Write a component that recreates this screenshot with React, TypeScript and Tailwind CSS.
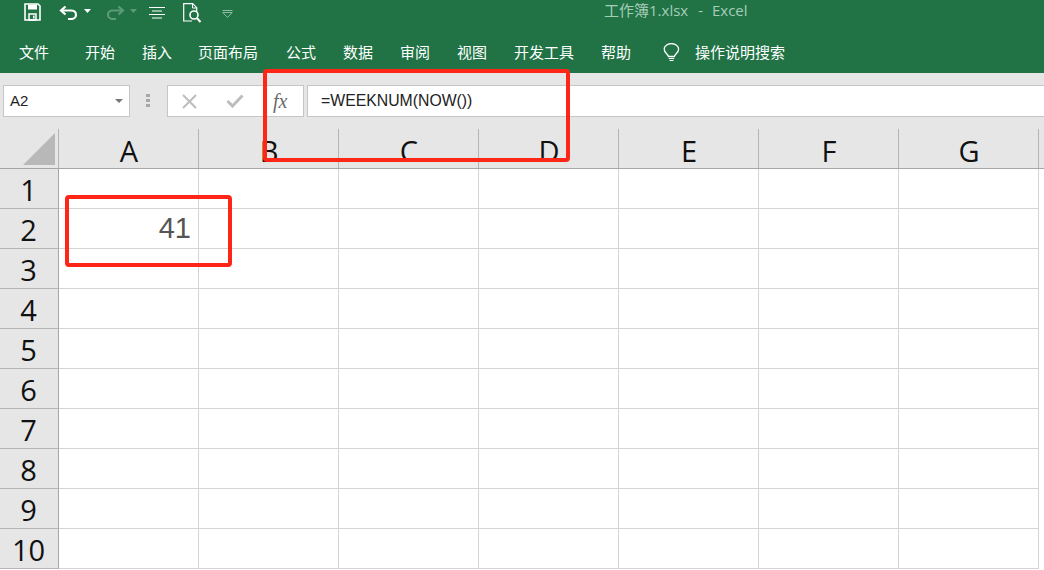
const CJK = "font-['Noto_Sans_CJK_SC','Noto_Sans',sans-serif]";

const menus: [string, string][] = [
  ["文件", "w-[30px] ml-[19px]"],
  ["开始", "w-[30px] ml-[36px]"],
  ["插入", "w-[30px] ml-[27px]"],
  ["页面布局", "w-[60px] ml-[26px]"],
  ["公式", "w-[30px] ml-[28px]"],
  ["数据", "w-[30px] ml-[27px]"],
  ["审阅", "w-[30px] ml-[27px]"],
  ["视图", "w-[30px] ml-[27px]"],
  ["开发工具", "w-[60px] ml-[27px]"],
  ["帮助", "w-[30px] ml-[27px]"],
];

const cols = ["A", "B", "C", "D", "E", "F", "G"];
const rows = [1, 2, 3, 4, 5, 6, 7, 8, 9, 10];

function QuickAccess() {
  return (
    <div className="flex h-[25px] items-center pl-[24px]">
      <svg width="17" height="18" viewBox="0 0 17 18" fill="none" className="mb-[2px]">
        <path d="M1 1h13l2 2v14H1z" stroke="#fff" strokeWidth="1.6" />
        <path d="M4 1.5h9v5H4z" fill="#fff" />
        <path d="M5 11h7v6H5z" stroke="#fff" strokeWidth="1.5" />
        <path d="M9 12.5h1.6v3H9z" fill="#fff" />
      </svg>
      <svg width="20" height="14" viewBox="0 0 20 14" fill="none" className="ml-[18px]">
        <path d="M2 4.500h10c3 0 5 1.800 5 4.200s-2 4.300-5 4.300H9" stroke="#fff" strokeWidth="2.200" />
        <path d="M6.500 0.500 2 4.500l4.500 4" stroke="#fff" strokeWidth="2.200" />
      </svg>
      <svg width="7" height="4" viewBox="0 0 7 4" className="ml-[5px] mb-[3px]">
        <path d="M0 0h7L3.500 4z" fill="#fff" />
      </svg>
      <svg width="20" height="14" viewBox="0 0 20 14" fill="none" className="ml-[14px]">
        <path d="M18 4.500H8c-3 0-5 1.800-5 4.200S5 13 8 13h3" stroke="#5d9a79" strokeWidth="2.200" />
        <path d="M13.500 0.500 18 4.500l-4.500 4" stroke="#5d9a79" strokeWidth="2.200" />
      </svg>
      <svg width="7" height="4" viewBox="0 0 7 4" className="ml-[5px] mb-[3px]">
        <path d="M0 0h7L3.500 4z" fill="#5d9a79" />
      </svg>
      <svg width="16" height="12" viewBox="0 0 16 12" fill="none" className="ml-[12px]">
        <path d="M0 .5h16M3 4h10M0 7.500h16M3 11h10" stroke="#fff" strokeWidth="1" />
      </svg>
      <svg width="19" height="20" viewBox="0 0 19 20" fill="none" className="ml-[18px] mt-[1px]">
        <path d="M9 18H.7V.7h9l4 4v4" stroke="#fff" strokeWidth="1.200" />
        <path d="M9.500.7v4.300h4" stroke="#fff" strokeWidth="1" />
        <circle cx="11" cy="12" r="4" stroke="#fff" strokeWidth="1.600" />
        <path d="M13.800 15l3.700 4" stroke="#fff" strokeWidth="2" />
      </svg>
      <svg width="11" height="8" viewBox="0 0 11 8" fill="none" className="ml-[20px] mt-[3px]">
        <path d="M.5.500h10M.8 2.500h9.400L5.500 7.500z" stroke="#8fbca3" strokeWidth="1" />
      </svg>
    </div>
  );
}

function TitleBar() {
  return (
    <div className="relative">
      <QuickAccess />
      <div className={`absolute left-[604px] top-[-1px] flex text-[15px] leading-[22px] whitespace-pre text-[#a6cdb8] ${CJK}`}>
        <span>工作簿</span>
        <span className="font-['Open_Sans',sans-serif]">1.xlsx</span>
        <span className="ml-[10px] font-['Open_Sans',sans-serif]">-</span>
        <span className="ml-[9px] font-['Open_Sans',sans-serif]">Excel</span>
      </div>
    </div>
  );
}

function MenuBar() {
  return (
    <div className={`flex h-[48px] items-start pt-[16px] text-[15px] leading-[22px] text-white ${CJK}`}>
      {menus.map(([label, cls]) => (
        <div key={label} className={`${cls} whitespace-nowrap`}>
          {label}
        </div>
      ))}
      <svg width="17" height="20" viewBox="0 0 17 20" fill="none" className="ml-[32px] mt-[2px]">
        <path
          d="M5.500 13.500C5 11 1.200 9.800 1.200 6.300a7.100 5.600 0 0 1 14.400 0c0 3.500-3.800 4.700-4.300 7.200z"
          stroke="#fff"
          strokeWidth="1.300"
        />
        <path d="M5.800 15.500h5.400M6.500 17.500h4" stroke="#fff" strokeWidth="1.200" />
      </svg>
      <div className="ml-[15px] whitespace-nowrap">操作说明搜索</div>
    </div>
  );
}

function FormulaBar() {
  return (
    <div className="flex h-[56px] bg-[#e6e6e6] pt-[12px] pl-[3px]">
      <div className="flex h-[32px] w-[127px] items-center justify-between border border-[#c6c6c6] bg-white pl-[6px] pr-[6px]">
        <span className="font-['Liberation_Sans',sans-serif] text-[15px] text-[#222]">A2</span>
        <svg width="8" height="4" viewBox="0 0 8 4">
          <path d="M0 0h8L4 4z" fill="#777" />
        </svg>
      </div>
      <div className="ml-[16px] mt-[9px] flex w-[5px] flex-col gap-[2px]">
        <div className="h-[3px] w-[4px] bg-[#a8a8a8]" />
        <div className="h-[3px] w-[4px] bg-[#a8a8a8]" />
        <div className="h-[3px] w-[4px] bg-[#a8a8a8]" />
      </div>
      <div className="ml-[16px] flex h-[32px] w-[137px] items-center border border-[#c6c6c6] bg-white">
        <svg width="15" height="15" viewBox="0 0 15 15" fill="none" className="ml-[14px]">
          <path d="M1 1l13 13M14 1 1 14" stroke="#bdbdbd" strokeWidth="2" />
        </svg>
        <svg width="18" height="14" viewBox="0 0 18 14" fill="none" className="ml-[29px]">
          <path d="M1.500 7l5 5L16.500 1.500" stroke="#bdbdbd" strokeWidth="3" />
        </svg>
        <span className="ml-[29px] font-['Liberation_Serif',serif] text-[20px] italic leading-none text-[#6b6b6b]">
          fx
        </span>
      </div>
      <div className="ml-[3px] flex h-[32px] flex-1 items-center border border-r-0 border-[#c6c6c6] bg-white pl-[13px] font-['Liberation_Sans',sans-serif] text-[15.800px] text-[#222]">
        =WEEKNUM(NOW())
      </div>
    </div>
  );
}

const HEAD = "font-['Open_Sans',sans-serif] text-[29px] font-normal text-[#111]";

function Sheet() {
  return (
    <div className="h-[441px] overflow-hidden bg-white">
      <div className="flex h-[40px] border-b border-[#a6a6a6] bg-[#e6e6e6]">
        <div className="relative h-full w-[59px] shrink-0 border-r border-[#b5b5b5]">
          <svg width="32" height="32" viewBox="0 0 32 32" className="absolute left-[23px] top-[4px]">
            <path d="M32 0v32H0z" fill="#b8b8b8" />
          </svg>
        </div>
        {cols.map((c) => (
          <div
            key={c}
            className={`flex h-full w-[140px] shrink-0 items-center justify-center border-r border-[#b5b5b5] pt-[4px] pl-[1px] leading-none ${HEAD}`}
          >
            {c}
          </div>
        ))}
      </div>
      {rows.map((r) => (
        <div key={r} className="flex h-[40px]">
          <div
            className={`flex h-full w-[59px] shrink-0 items-center justify-center border-r border-b border-r-[#a6a6a6] border-b-[#b5b5b5] bg-[#e6e6e6] pt-[1px] pr-[1px] leading-none ${HEAD}`}
          >
            {r}
          </div>
          {cols.map((c) => (
            <div
              key={c}
              className="flex h-full w-[140px] shrink-0 items-center justify-end border-r border-b border-[#d4d4d4] pr-[7px] font-['Liberation_Sans',sans-serif] text-[29px] leading-none text-[#555]"
            >
              {r === 2 && c === "A" ? "41" : ""}
            </div>
          ))}
        </div>
      ))}
    </div>
  );
}

export default function App() {
  return (
    <div className="relative h-[570px] w-[1044px] overflow-hidden">
      <div className="bg-[#217346]">
        <TitleBar />
        <MenuBar />
      </div>
      <FormulaBar />
      <Sheet />
      <div className="absolute left-[263px] top-[69px] h-[93px] w-[307px] rounded-[4px] border-[4px] border-[#ff2618]" />
      <div className="absolute left-[65px] top-[195px] h-[72px] w-[167px] rounded-[4px] border-[4px] border-[#ff2618]" />
    </div>
  );
}
